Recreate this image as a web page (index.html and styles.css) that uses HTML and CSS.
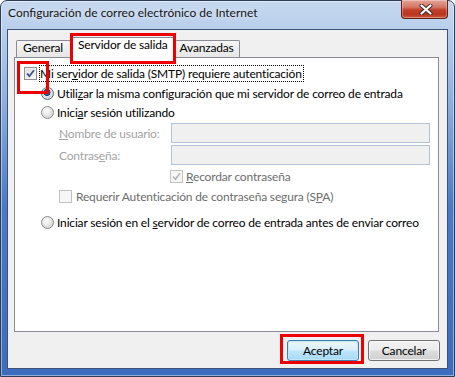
FILE: index.html
```html
<!DOCTYPE html>
<html lang="es">
<head>
  <meta charset="UTF-8" />
  <meta name="viewport" content="width=device-width, initial-scale=1.0"/>
  <title>Configuración de correo electrónico de Internet</title>
  <link rel="stylesheet" href="styles.css">
</head>
<body>
  <div class="window">
    <div class="titlebar">
      <div class="title">Configuración de correo electrónico de Internet</div>
      <div class="close">
        <svg width="14" height="11" viewBox="0 0 14 11">
          <path d="M2.5 1.5 L11.5 9.5 M11.5 1.5 L2.5 9.5" stroke="#3b2a28" stroke-width="4" stroke-linecap="round"/>
          <path d="M2.5 1.5 L11.5 9.5 M11.5 1.5 L2.5 9.5" stroke="#ffffff" stroke-width="2.2" stroke-linecap="round"/>
        </svg>
      </div>
    </div>

    <div class="client">
      <div class="tabs">
        <div class="tab first">General</div>
        <div class="tab active">Servidor de salida<span class="mark mark-tab"></span></div>
        <div class="tab">Avanzadas</div>
      </div>

      <div class="panel">
        <div class="row">
          <span class="check">
            <svg width="9" height="9" viewBox="0 0 9 9"><path d="M1 4.5 L3.4 7.2 L8 1.2" fill="none" stroke="#3c4f86" stroke-width="1.8"/></svg>
            <span class="mark mark-check"></span>
          </span>
          <span class="focus">Mi ser<u>v</u>idor de salida (SMTP) requiere autenticación</span>
        </div>

        <div class="row opt">
          <span class="radio selected"></span>
          <span>Utili<u>z</u>ar la misma configuración que mi servidor de correo de entrada</span>
        </div>
        <div class="row opt opt2">
          <span class="radio"></span>
          <span>Inici<u>a</u>r sesión utilizando</span>
        </div>

        <div class="field">
          <span class="label"><u>N</u>ombre de usuario:</span>
          <span class="input"></span>
        </div>
        <div class="field">
          <span class="label">Contras<u>e</u>ña:</span>
          <span class="input"></span>
        </div>

        <div class="row remember">
          <span class="check disabled">
            <svg width="9" height="9" viewBox="0 0 9 9"><path d="M1 4.5 L3.4 7.2 L8 1.2" fill="none" stroke="#b4b4b4" stroke-width="1.5"/></svg>
          </span>
          <span class="dim"><u>R</u>ecordar contraseña</span>
        </div>
        <div class="row spa">
          <span class="check disabled"></span>
          <span class="dim">Requerir Autenticación de contraseña segura (S<u>P</u>A)</span>
        </div>

        <div class="row opt last">
          <span class="radio"></span>
          <span>Iniciar sesión en el <u>s</u>ervidor de correo de entrada antes de enviar correo</span>
        </div>
      </div>

      <div class="buttons">
        <button class="btn default">Aceptar<span class="mark mark-btn"></span></button>
        <button class="btn">Cancelar</button>
      </div>
    </div>
  </div>
</body>
</html>
```

FILE: styles.css
```css
body {
  margin: 0;
  font-family: 'Lato', 'Noto Sans', sans-serif;
  font-size: 12px;
  letter-spacing: -0.17px;
  color: #000;
}

.window {
  width: 455px;
  height: 377px;
  box-sizing: border-box;
  border: 1px solid #2c3d57;
  border-radius: 7px 7px 0 0;
  background: linear-gradient(180deg, #c6d8ef 0%, #b0c9e9 12%, #86a9dc 30%, #4a79c6 55%, #3c6cbd 100%);
  box-shadow: inset 0 0 0 1px rgba(255,255,255,0.45);
  display: flex;
  flex-direction: column;
}

.titlebar {
  height: 28px;
  display: flex;
  justify-content: space-between;
  align-items: flex-start;
  padding-left: 7px;
}

.title {
  padding-top: 4px;
  font-size: 12px;
  letter-spacing: 0;
  color: #161616;
  text-shadow: 0 0 6px rgba(255,255,255,0.9);
}

.close {
  width: 47px;
  height: 19px;
  box-sizing: border-box;
  margin-top: -1px;
  margin-right: 6px;
  border: 1px solid #5e2218;
  border-top: none;
  border-radius: 0 0 4px 4px;
  background: linear-gradient(180deg, #e3a598 0%, #d47563 40%, #c1402a 55%, #b8361f 80%, #d2593d 100%);
  box-shadow: inset 0 0 0 1px rgba(255,255,255,0.3);
  display: flex;
  align-items: center;
  justify-content: center;
  padding-left: 2px;
}

.client {
  height: 340px;
  margin: 0 6px 7px;
  box-sizing: border-box;
  border: 1px solid #3d5275;
  background-color: #f0f0f0;
  padding: 7px 8px 0 6px;
}

.tabs {
  display: flex;
  align-items: flex-start;
  height: 21px;
  padding-left: 2px;
  margin-bottom: -1px;
  position: relative;
  z-index: 1;
}

.tab {
  height: 17px;
  box-sizing: border-box;
  margin-top: 3px;
  padding: 0 5px;
  line-height: 14px;
  white-space: nowrap;
  border: 1px solid #898c95;
  border-bottom: none;
  border-radius: 2px 2px 0 0;
  background: linear-gradient(180deg, #f5f5f5, #e6e6e6);
}

.tab.first {
  padding: 0 7px 0 6px;
}

.tab + .tab {
  border-left: none;
}

.tab.active {
  height: 21px;
  margin-top: 0;
  padding: 0 6px;
  background: #fff;
  border-left: 1px solid #898c95;
  position: relative;
}

.tab.active + .tab {
  border-left: none;
}

.panel {
  height: 275px;
  box-sizing: border-box;
  border: 1px solid #898c95;
  background-color: #fff;
  padding: 6px 7px 0 9px;
  white-space: nowrap;
}

.row {
  display: flex;
  align-items: center;
  height: 19px;
}

.check {
  width: 13px;
  height: 13px;
  box-sizing: border-box;
  border: 1px solid #8e8f8f;
  background: linear-gradient(135deg, #dadada, #fbfbfb);
  box-shadow: inset 0 0 0 1px #f2f2f2;
  display: flex;
  align-items: center;
  justify-content: center;
  position: relative;
  flex-shrink: 0;
}

.check.disabled {
  border-color: #c2c2c2;
  background: #f6f6f6;
  box-shadow: none;
}

.focus {
  margin-left: 2px;
  padding: 0 1px 0 0;
  line-height: 15px;
  border: 1px dotted #000;
}

.radio {
  width: 13px;
  height: 13px;
  box-sizing: border-box;
  border-radius: 50%;
  border: 1px solid #8b8b8b;
  background: radial-gradient(circle at 40% 35%, #ffffff 0, #e6e6e6 45%, #c6c6c6 100%);
  margin-right: 3px;
  flex-shrink: 0;
}

.radio.selected {
  border-color: #5a6a80;
  background:
    radial-gradient(circle at 45% 40%, #9fd8f8 0, #2d82c8 1.6px, #0e3f78 3.3px, transparent 3.8px),
    radial-gradient(circle at 40% 35%, #ffffff 0, #e6e6e6 45%, #c6c6c6 100%);
}

.opt {
  margin-left: 17px;
  height: 20px;
}

.opt2 {
  height: 19px;
}

.field {
  display: flex;
  align-items: center;
  height: 22px;
  margin-left: 35px;
}

.label {
  width: 112px;
  color: #a3a3a3;
}

.input {
  width: 259px;
  height: 20px;
  box-sizing: border-box;
  border: 1px solid #b3c4d8;
  background-color: #f0f0f0;
}

.remember {
  height: 21px;
  margin-left: 146px;
}

.remember .check {
  margin-right: 3px;
}

.spa {
  margin-left: 35px;
}

.spa .check {
  margin-right: 4px;
}

.dim {
  color: #6d6d6d;
}

.last {
  margin-top: 6px;
}

.buttons {
  display: flex;
  justify-content: flex-end;
  gap: 9px;
  margin-top: 8px;
  margin-right: -1px;
}

.btn {
  width: 72px;
  height: 21px;
  padding: 0;
  font-family: inherit;
  font-size: 12px;
  letter-spacing: inherit;
  color: #000;
  border: 1px solid #707070;
  border-radius: 3px;
  background: linear-gradient(180deg, #f2f2f2 0%, #ebebeb 48%, #dddddd 52%, #cfcfcf 100%);
  box-shadow: inset 0 0 0 1px rgba(255,255,255,0.7);
  position: relative;
}

.btn.default {
  border-color: #3c7fb1;
  background: linear-gradient(180deg, #eaf6fd 0%, #d9f0fc 48%, #bee6fd 52%, #a7d9f5 100%);
  box-shadow: inset 0 0 0 1px #c5e6f8;
}

.mark {
  position: absolute;
  box-sizing: border-box;
  border: 3px solid #ee0000;
  pointer-events: none;
}

.mark-tab {
  left: -2px;
  right: -2px;
  top: -5px;
  height: 31px;
}

.mark-check {
  left: -8px;
  top: -7px;
  width: 32px;
  height: 33px;
}

.mark-btn {
  left: -8px;
  top: -7px;
  width: 84px;
  height: 30px;
}
```
